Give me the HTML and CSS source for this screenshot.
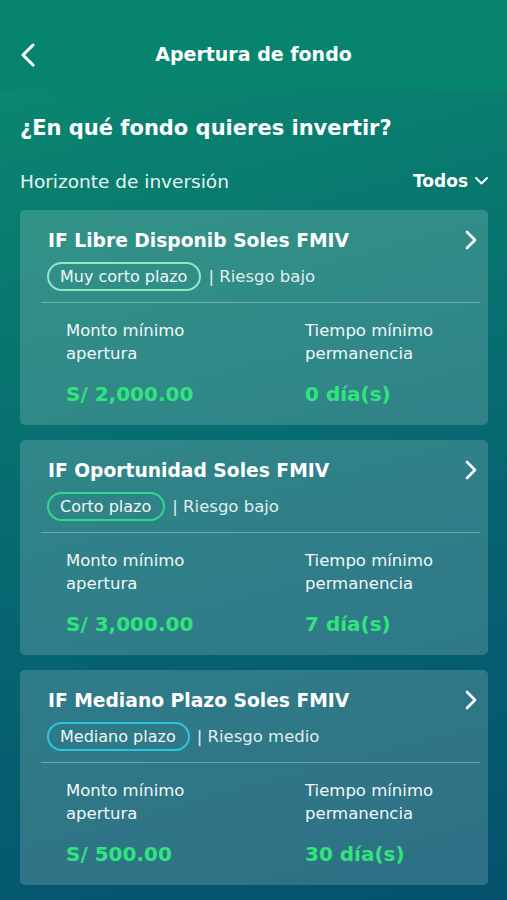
FILE: index.html
```html
<!DOCTYPE html>
<html lang="es">
<head>
<meta charset="utf-8">
<link rel="stylesheet" href="styles.css">
</head>
<body>
<div class="screen">
  <header class="topbar">
    <svg class="back" width="18" height="24" viewBox="0 0 18 24"><path d="M14 2 L4 12 L14 22" fill="none" stroke="#fff" stroke-width="3" stroke-linecap="round" stroke-linejoin="round"/></svg>
    <h1 class="title">Apertura de fondo</h1>
  </header>
  <main class="content">
    <h2 class="question">¿En qué fondo quieres invertir?</h2>
    <div class="filter">
      <span class="filter-label">Horizonte de inversión</span>
      <span class="filter-value">Todos <svg width="15" height="10" viewBox="0 0 15 10"><path d="M2 2 L7.5 7.5 L13 2" fill="none" stroke="#fff" stroke-width="2" stroke-linecap="round" stroke-linejoin="round"/></svg></span>
    </div>

    <div class="card">
      <div class="card-head">
        <div class="card-title">IF Libre Disponib Soles FMIV</div>
        <svg class="chev" width="14" height="22" viewBox="0 0 14 22"><path d="M3 3 L11 11 L3 19" fill="none" stroke="#fff" stroke-width="2.6" stroke-linecap="round" stroke-linejoin="round"/></svg>
      </div>
      <div class="tags"><span class="pill pill-mint">Muy corto plazo</span><span class="risk">| Riesgo bajo</span></div>
      <div class="divider"></div>
      <div class="stats">
        <div class="stat"><div class="stat-label">Monto mínimo<br>apertura</div><div class="stat-value">S/ 2,000.00</div></div>
        <div class="stat"><div class="stat-label">Tiempo mínimo<br>permanencia</div><div class="stat-value">0 día(s)</div></div>
      </div>
    </div>

    <div class="card">
      <div class="card-head">
        <div class="card-title">IF Oportunidad Soles FMIV</div>
        <svg class="chev" width="14" height="22" viewBox="0 0 14 22"><path d="M3 3 L11 11 L3 19" fill="none" stroke="#fff" stroke-width="2.6" stroke-linecap="round" stroke-linejoin="round"/></svg>
      </div>
      <div class="tags"><span class="pill pill-green">Corto plazo</span><span class="risk">| Riesgo bajo</span></div>
      <div class="divider"></div>
      <div class="stats">
        <div class="stat"><div class="stat-label">Monto mínimo<br>apertura</div><div class="stat-value">S/ 3,000.00</div></div>
        <div class="stat"><div class="stat-label">Tiempo mínimo<br>permanencia</div><div class="stat-value">7 día(s)</div></div>
      </div>
    </div>

    <div class="card">
      <div class="card-head">
        <div class="card-title">IF Mediano Plazo Soles FMIV</div>
        <svg class="chev" width="14" height="22" viewBox="0 0 14 22"><path d="M3 3 L11 11 L3 19" fill="none" stroke="#fff" stroke-width="2.6" stroke-linecap="round" stroke-linejoin="round"/></svg>
      </div>
      <div class="tags"><span class="pill pill-cyan">Mediano plazo</span><span class="risk">| Riesgo medio</span></div>
      <div class="divider"></div>
      <div class="stats">
        <div class="stat"><div class="stat-label">Monto mínimo<br>apertura</div><div class="stat-value">S/ 500.00</div></div>
        <div class="stat"><div class="stat-label">Tiempo mínimo<br>permanencia</div><div class="stat-value">30 día(s)</div></div>
      </div>
    </div>

    <div class="card"></div>
  </main>
</div>
</body>
</html>
```

FILE: styles.css
```css
* { box-sizing: border-box; margin: 0; padding: 0; }
html, body { width: 507px; height: 900px; overflow: hidden; }
body {
  font-family: "DejaVu Sans", "Open Sans", sans-serif;
  color: #fff;
  background: #045570;
}
.screen {
  width: 507px;
  height: 900px;
  display: flex;
  flex-direction: column;
  background: linear-gradient(165deg, #0c8c70 0%, #08786f 30%, #066571 60%, #04526d 100%);
}
.topbar {
  height: 90px;
  flex: none;
  background: #06846e;
  display: flex;
  align-items: center;
  justify-content: center;
  position: relative;
  padding-top: 18px;
}
.back { position: absolute; left: 19px; top: 43px; }
.title { font-size: 19px; font-weight: 700; }
.content { padding: 23px 19px 0 20px; display: flex; flex-direction: column; }
.question { font-size: 21px; font-weight: 700; line-height: 30px; }
.filter {
  display: flex;
  justify-content: space-between;
  align-items: center;
  margin-top: 26px;
  height: 24px;
}
.filter-label { font-size: 18.5px; color: #e8f4f0; }
.filter-value { font-size: 17px; font-weight: 700; display: flex; align-items: center; gap: 6px; margin-right: -1px; }
.card {
  margin-top: 15px;
  height: 215px;
  border-radius: 5px;
  background: rgba(255,255,255,0.17);
  padding: 18px 8px 0 21px;
  flex: none;
}
.filter + .card { margin-top: 17px; }
.card-head { display: flex; justify-content: space-between; align-items: center; padding-left: 7px; padding-right: 2px; }
.card-title { font-size: 18.7px; font-weight: 700; line-height: 26px; }
.chev { margin-top: -2px; }
.tags { display: flex; align-items: center; margin-top: 8px; padding-left: 6px; }
.pill {
  font-size: 16px;
  line-height: 25px;
  padding: 0 12px 0 11px;
  border: 2px solid;
  border-radius: 15px;
  color: #eef8f5;
}
.pill-mint { border-color: #8fe9c4; }
.pill-green { border-color: #2ed98a; }
.pill-cyan { border-color: #2bc5e0; }
.risk { font-size: 16.5px; margin-left: 7px; color: #e2eeee; }
.divider { height: 1px; background: rgba(255,255,255,0.3); margin-top: 11px; }
.stats { display: grid; grid-template-columns: 239px 1fr; padding-left: 25px; margin-top: 16px; }
.stat-label { font-size: 16.5px; line-height: 23px; color: #f2f8f8; }
.stat-value { font-size: 20px; font-weight: 700; color: #2fe57c; margin-top: 16px; line-height: 26px; }
```
